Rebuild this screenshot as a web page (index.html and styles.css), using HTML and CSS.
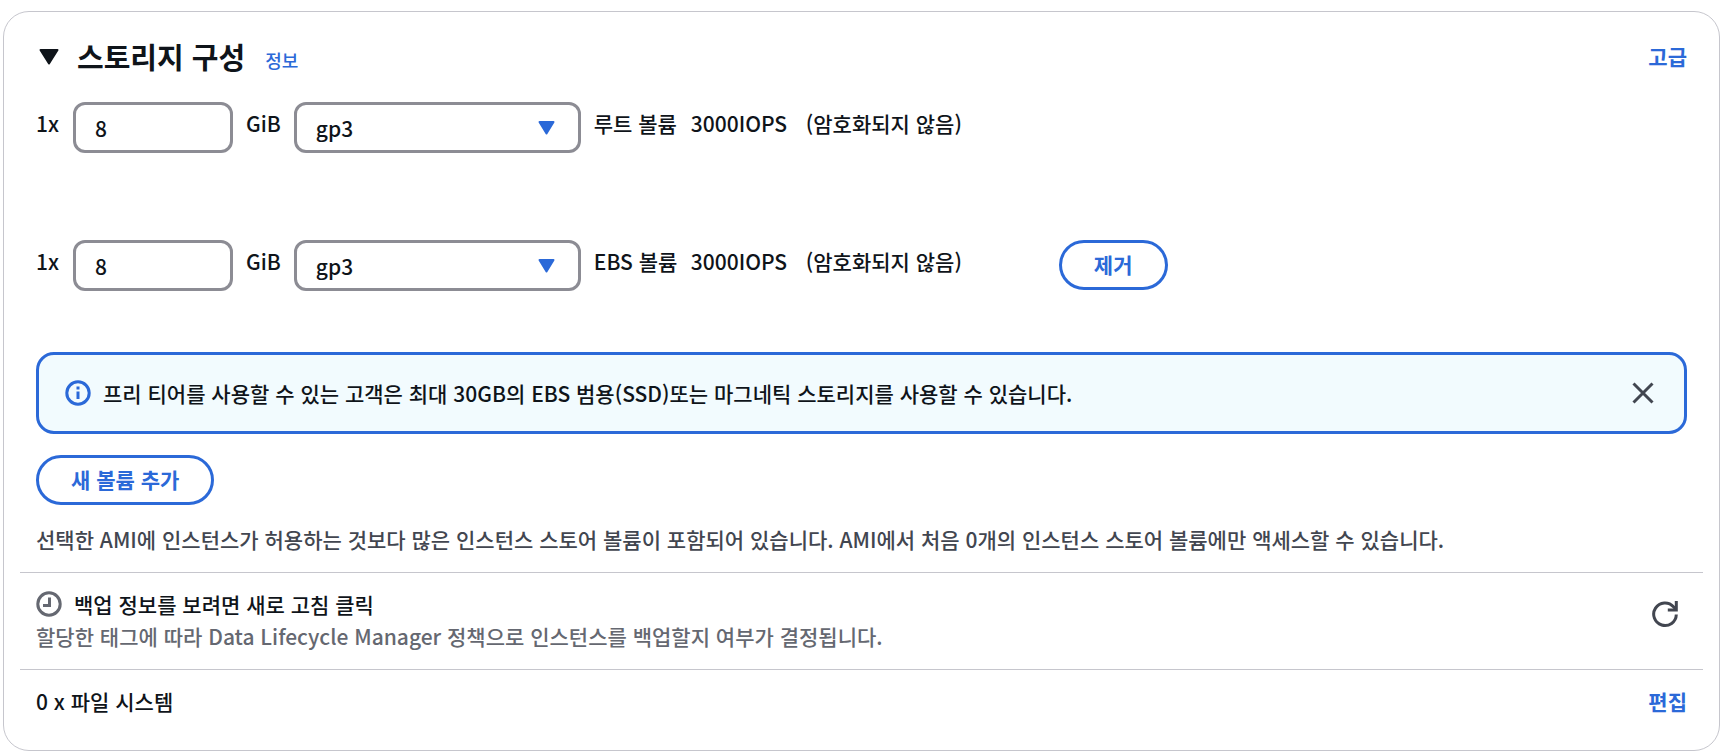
FILE: index.html
```html
<!DOCTYPE html>
<html lang="ko">

<head>
    <meta charset="UTF-8">
    <meta name="viewport" content="width=device-width, initial-scale=1.0">
    <title>스토리지 구성</title>
    <link rel="stylesheet" href="styles.css">
</head>

<body>
    <section class="storage-card">
        <header class="card-header">
            <button type="button" class="toggle" aria-label="접기">
                <svg width="20" height="16" viewBox="0 0 20 16">
                    <path d="M1.5 1h17L10 14.5z" fill="currentColor" stroke="currentColor" stroke-width="2" stroke-linejoin="round" />
                </svg>
            </button>
            <h2>스토리지 구성</h2>
            <a href="#" class="info-link">정보</a>
            <a href="#" class="action-link">고급</a>
        </header>

        <div class="volume-list">
            <div class="volume-row">
                <label for="size-root">1x</label>
                <input type="text" id="size-root" class="size-input" value="8">
                <label for="type-root">GiB</label>
                <div class="select-wrap">
                    <select id="type-root">
                        <option>gp3</option>
                        <option>gp2</option>
                    </select>
                    <svg class="caret" width="17" height="14" viewBox="0 0 17 14">
                        <path d="M1.5 1h14L8.5 12.5z" fill="currentColor" stroke="currentColor" stroke-width="2" stroke-linejoin="round" />
                    </svg>
                </div>
                <span class="volume-name">루트 볼륨</span>
                <span class="volume-iops">3000IOPS</span>
                <span>(암호화되지 않음)</span>
            </div>
            <div class="volume-row">
                <label for="size-ebs">1x</label>
                <input type="text" id="size-ebs" class="size-input" value="8">
                <label for="type-ebs">GiB</label>
                <div class="select-wrap">
                    <select id="type-ebs">
                        <option>gp3</option>
                        <option>gp2</option>
                    </select>
                    <svg class="caret" width="17" height="14" viewBox="0 0 17 14">
                        <path d="M1.5 1h14L8.5 12.5z" fill="currentColor" stroke="currentColor" stroke-width="2" stroke-linejoin="round" />
                    </svg>
                </div>
                <span class="volume-name">EBS 볼륨</span>
                <span class="volume-iops">3000IOPS</span>
                <span>(암호화되지 않음)</span>
                <button type="button" class="btn remove-btn">제거</button>
            </div>
        </div>

        <div class="alert">
            <svg class="alert-icon" width="26" height="26" viewBox="0 0 26 26" fill="none" stroke="currentColor" stroke-width="3">
                <circle cx="13" cy="13" r="11.2" />
                <path d="M13 11.5v7.5M13 6.5v3" />
            </svg>
            <p>프리 티어를 사용할 수 있는 고객은 최대 30GB의 EBS 범용(SSD)또는 마그네틱 스토리지를 사용할 수 있습니다.</p>
            <button type="button" class="icon-btn" aria-label="닫기">
                <svg width="22" height="22" viewBox="0 0 22 22" fill="none" stroke="currentColor" stroke-width="3">
                    <path d="M1.5 1.5l19 19M20.5 1.5l-19 19" />
                </svg>
            </button>
        </div>

        <button type="button" class="btn">새 볼륨 추가</button>
        <p class="store-note">선택한 AMI에 인스턴스가 허용하는 것보다 많은 인스턴스 스토어 볼륨이 포함되어 있습니다. AMI에서 처음 0개의 인스턴스 스토어 볼륨에만 액세스할 수 있습니다.</p>

        <div class="section">
            <div>
                <p class="backup-title">
                    <svg width="26" height="26" viewBox="0 0 26 26" fill="none" stroke="currentColor" stroke-width="3">
                        <circle cx="13" cy="13" r="11.2" />
                        <path d="M13.5 6.5v8H7" />
                    </svg>
                    백업 정보를 보려면 새로 고침 클릭
                </p>
                <p class="backup-desc">할당한 태그에 따라 Data Lifecycle Manager 정책으로 인스턴스를 백업할지 여부가 결정됩니다.</p>
            </div>
            <button type="button" class="icon-btn refresh-btn" aria-label="새로 고침">
                <svg width="28" height="28" viewBox="0 0 28 28" fill="none" stroke="currentColor" stroke-width="3">
                    <path d="M25.3 14.5A11.3 11.3 0 1 1 22.5 6.8L25 9.5" />
                    <path d="M25.3 1v9h-8.5" />
                </svg>
            </button>
        </div>

        <div class="section">
            <span>0 x 파일 시스템</span>
            <a href="#" class="action-link">편집</a>
        </div>
    </section>
</body>

</html>
```

FILE: styles.css
```css
* {
    box-sizing: border-box;
}

body {
    margin: 11px 10px 2px 3px;
    background-color: #ffffff;
    color: #0f141a;
    font-family: "Noto Sans CJK KR", sans-serif;
    font-size: 21px;
    font-weight: 500;
    line-height: 32px;
}

h2,
p {
    margin: 0;
}

a {
    color: #2b69d8;
    text-decoration: none;
}

svg {
    display: block;
    flex: none;
}

input,
select,
button {
    font: inherit;
    color: inherit;
}

.storage-card {
    padding: 24px 32px 16px;
    border: 1px solid #c6c6cd;
    border-radius: 26px;
}

.card-header {
    display: flex;
    align-items: center;
    height: 40px;
}

.card-header h2 {
    margin: 0 20px 0 18px;
    font-size: 29px;
    font-weight: 700;
}

.toggle {
    padding: 2px 0 0 3px;
    border: none;
    background: none;
    cursor: pointer;
}

.info-link {
    padding-top: 8px;
    font-size: 18px;
}

.action-link {
    margin-left: auto;
    font-weight: 700;
}

.volume-list {
    display: flex;
    flex-direction: column;
    gap: 87px;
    padding: 26px 0 61px;
}

.volume-row {
    display: flex;
    align-items: flex-start;
    gap: 13px;
    line-height: 42px;
}

.volume-row label:first-child {
    min-width: 24px;
}

.size-input,
.select-wrap select {
    height: 51px;
    padding: 0 19px;
    border: 3px solid #8c8c94;
    border-radius: 12px;
    background-color: #ffffff;
}

.size-input {
    width: 160px;
}

.select-wrap {
    position: relative;
    width: 287px;
}

.select-wrap select {
    display: block;
    width: 100%;
    appearance: none;
}

.caret {
    position: absolute;
    top: 19px;
    right: 26px;
    color: #2b69d8;
    pointer-events: none;
}

.volume-name {
    min-width: 84px;
}

.volume-iops {
    min-width: 102px;
}

.btn {
    height: 50px;
    padding: 0 32px 2px;
    border: 3px solid #2b69d8;
    border-radius: 25px;
    background-color: #ffffff;
    color: #2b69d8;
    font-weight: 700;
    line-height: 32px;
    cursor: pointer;
}

.remove-btn {
    margin-left: 84px;
}

.alert {
    display: flex;
    align-items: center;
    gap: 12px;
    min-height: 82px;
    margin-bottom: 21px;
    padding: 12px 30px 12px 26px;
    border: 3px solid #2b69d8;
    border-radius: 18px;
    background-color: #f2fbfe;
}

.alert-icon {
    color: #2b69d8;
}

.icon-btn {
    margin-left: auto;
    padding: 0;
    border: none;
    background: none;
    color: #424650;
    cursor: pointer;
}

.store-note {
    padding: 18px 0 17px;
    color: #424650;
}

.section {
    display: flex;
    align-items: flex-start;
    margin: 0 -16px;
    padding: 15px 16px 17px;
    border-top: 1px solid #c6c6cd;
}

.backup-title {
    display: flex;
    align-items: center;
    gap: 12px;
}

.backup-title svg,
.backup-desc {
    color: #656871;
}

.refresh-btn {
    padding: 12px 8px;
}
```
